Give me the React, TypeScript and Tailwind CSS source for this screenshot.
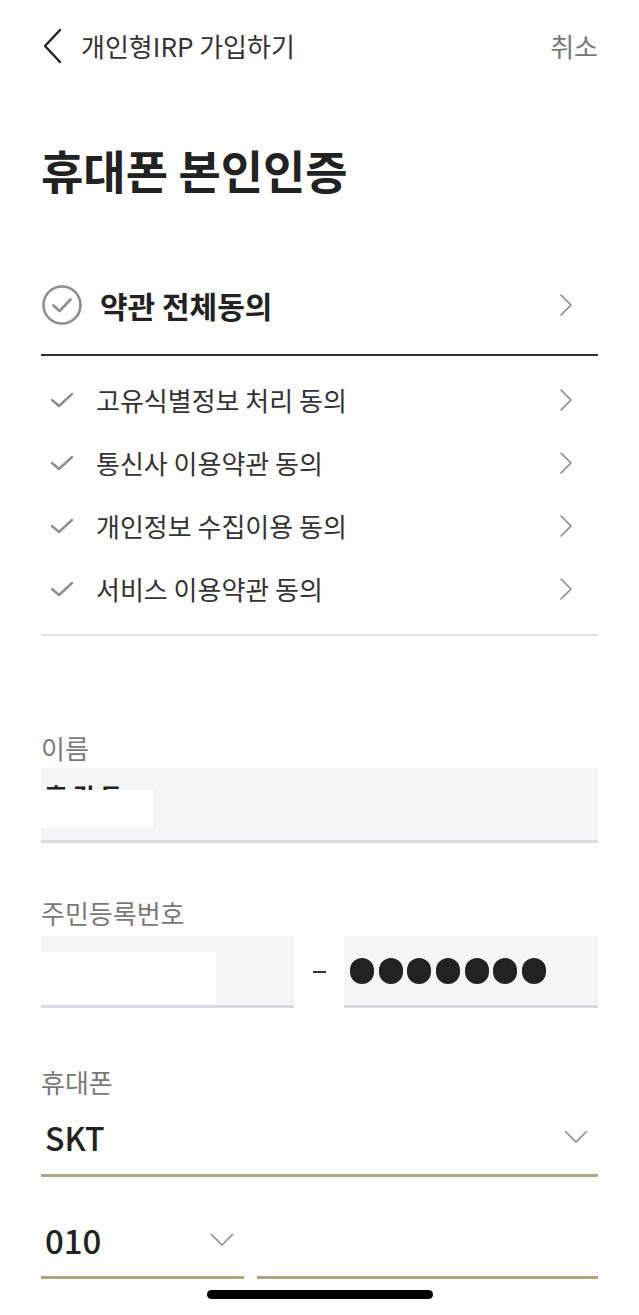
import React from "react";

const Chevron = ({ className = "" }: { className?: string }) => (
  <svg className={className} width="14" height="24" viewBox="0 0 14 24" fill="none">
    <path d="M2 2 L12 12 L2 22" stroke="#8a8a8a" strokeWidth="1.6" strokeLinecap="round" strokeLinejoin="round" />
  </svg>
);

const ChevronDown = ({ className = "" }: { className?: string }) => (
  <svg className={className} width="24" height="14" viewBox="0 0 24 14" fill="none">
    <path d="M1.5 1.5 L12 12 L22.5 1.5" stroke="#8a8a8a" strokeWidth="1.5" strokeLinecap="round" strokeLinejoin="round" />
  </svg>
);

const Check = () => (
  <svg width="24" height="16" viewBox="0 0 24 16" fill="none">
    <path d="M2 8 L9 14 L22 2" stroke="#8e8e93" strokeWidth="2.4" strokeLinecap="round" strokeLinejoin="round" />
  </svg>
);

const items = ["고유식별정보 처리 동의", "통신사 이용약관 동의", "개인정보 수집이용 동의", "서비스 이용약관 동의"];

export default function App() {
  return (
    <div
      className="w-[639px] min-h-[1315px] bg-white text-[#222] overflow-hidden"
      style={{ fontFamily: '"Noto Sans CJK KR", "Noto Sans", sans-serif' }}
    >
      {/* header */}
      <div className="h-[92px] flex items-center justify-between px-[41px]">
        <div className="flex items-center">
          <svg width="22" height="36" viewBox="0 0 22 36" fill="none">
            <path d="M19 2 L4 18 L19 34" stroke="#222" strokeWidth="2.4" strokeLinecap="round" strokeLinejoin="round" />
          </svg>
          <span className="ml-[18px] text-[26px] leading-[34px] text-[#333]">개인형IRP 가입하기</span>
        </div>
        <span className="text-[26px] leading-[34px] text-[#777]">취소</span>
      </div>

      <div className="px-[41px]">
        <h1 className="mt-[51px] text-[46px] leading-[52px] font-bold">휴대폰 본인인증</h1>

        {/* all agree */}
        <div className="mt-[75px] h-[70px] flex items-center justify-between">
          <div className="flex items-center">
            <svg width="42" height="42" viewBox="0 0 42 42" fill="none">
              <circle cx="21" cy="21" r="18.5" stroke="#8e8e93" strokeWidth="2.6" />
              <path d="M12.5 21.5 L18.5 27 L29.5 15.5" stroke="#8e8e93" strokeWidth="2.6" strokeLinecap="round" strokeLinejoin="round" />
            </svg>
            <span className="ml-[17px] text-[30px] leading-[38px] font-bold">약관 전체동의</span>
          </div>
          <Chevron className="mr-[25px]" />
        </div>
        <div className="mt-[14px] h-[2px] bg-[#333]" />

        <div className="pt-[12px] pb-[14px]">
          {items.map((t) => (
            <div key={t} className="h-[63px] flex items-center justify-between">
              <div className="flex items-center">
                <div className="ml-[9px]">
                  <Check />
                </div>
                <span className="ml-[22px] text-[26px] leading-[34px] text-[#333]">{t}</span>
              </div>
              <Chevron className="mr-[25px]" />
            </div>
          ))}
        </div>
        <div className="h-[2px] bg-[#e3e3e5]" />

        {/* name */}
        <div className="mt-[95px] text-[26px] leading-[34px] text-[#7a7a7a]">이름</div>
        <div className="mt-[3px] relative h-[75px] bg-[#f5f5f6] border-b-[3px] border-[#dcdce0]">
          <span className="absolute left-[4px] top-[12px] text-[24px] leading-[32px] font-bold text-[#222]">홍 길 동</span>
          <div className="absolute left-0 top-[22px] w-[112px] h-[38px] bg-white" />
        </div>

        {/* ssn */}
        <div className="mt-[53px] text-[26px] leading-[34px] text-[#7a7a7a]">주민등록번호</div>
        <div className="mt-[6px] flex items-stretch">
          <div className="relative w-[253px] h-[72px] bg-[#f5f5f6] border-b-[3px] border-[#dcdce0]">
            <div className="absolute left-0 top-[16px] w-[175px] h-[53px] bg-white" />
          </div>
          <div className="w-[50px] flex items-center justify-center">
            <div className="w-[13px] h-[2.5px] bg-[#333]" />
          </div>
          <div className="flex-1 h-[72px] bg-[#f5f5f6] border-b-[3px] border-[#dcdce0] flex items-center pl-[6px] gap-[4.7px]">
            {[0, 1, 2, 3, 4, 5, 6].map((i) => (
              <div key={i} className="w-[24px] h-[26px] rounded-full bg-[#222]" />
            ))}
          </div>
        </div>

        {/* phone */}
        <div className="mt-[57px] text-[26px] leading-[34px] text-[#7a7a7a]">휴대폰</div>
        <div className="mt-[1px] h-[77px] flex items-center justify-between border-b-[3px] border-[#b3a57f]">
          <span className="ml-[4px] text-[32px] leading-[40px] font-medium text-[#222]">SKT</span>
          <ChevronDown className="mr-[10px]" />
        </div>
        <div className="mt-[26px] flex">
          <div className="w-[203px] h-[76px] flex items-center justify-between border-b-[3px] border-[#b3a57f]">
            <span className="ml-[4px] text-[33px] leading-[40px] font-medium text-[#222]">010</span>
            <ChevronDown className="mr-[10px]" />
          </div>
          <div className="ml-[13px] flex-1 h-[76px] border-b-[3px] border-[#b3a57f]" />
        </div>
      </div>

      <div className="mt-[11px] flex justify-center">
        <div className="w-[226px] h-[9px] rounded-full bg-black" />
      </div>
    </div>
  );
}
